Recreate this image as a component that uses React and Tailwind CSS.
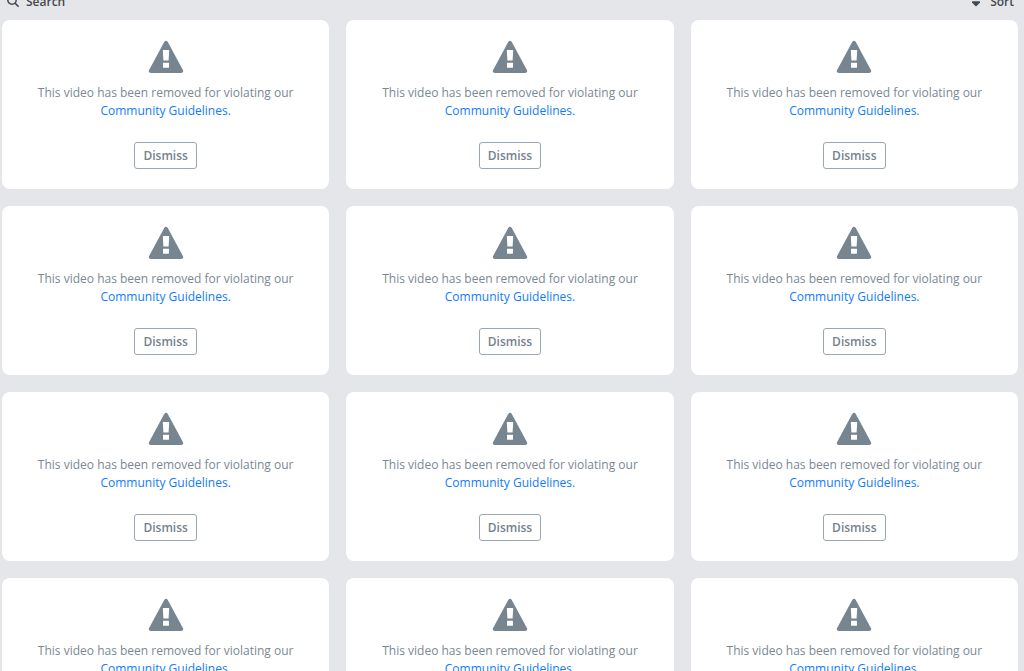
import React, { useState } from 'react';

const initialCards = Array.from({ length: 12 }, (_, index) => ({ id: index + 1 }));

function WarningIcon() {
  return (
    <svg className="w-9 h-[34px]" viewBox="0 0 36 34" fill="#778591" aria-hidden="true">
      <path
        fillRule="evenodd"
        d="M16.2 1.9Q18 -.2 19.8 1.9L35 30.2Q36 32.8 33 33H3Q0 32.8 1 30.2ZM14.8 10.4L15.4 20.6H20.6L21.2 10.4Q21.2 10 20.8 10H15.2Q14.8 10 14.8 10.4ZM15.4 22.7Q15 22.7 15 23.1V27.3Q15 27.7 15.4 27.7H20.6Q21 27.7 21 27.3V23.1Q21 22.7 20.6 22.7Z"
      />
    </svg>
  );
}

function SearchIcon() {
  return (
    <svg className="w-3 h-3" viewBox="0 0 12 12" fill="none" stroke="#45494d" strokeWidth="1.5" aria-hidden="true">
      <circle cx="5" cy="4" r="4.2" />
      <path d="M8 7.1L11.6 10.7" />
    </svg>
  );
}

function CaretIcon() {
  return (
    <svg className="mt-[3px] w-2 h-1.5" viewBox="0 0 8 6" fill="#45494d" aria-hidden="true">
      <path d="M0 .8Q0 .3 .6 .3H7.4Q8 .3 8 .8V1.4L4.4 5.2Q4 5.5 3.6 5.2L0 1.4Z" />
    </svg>
  );
}

function RemovedCard({ onDismiss }) {
  return (
    <article className="flex flex-col items-center bg-white rounded-lg px-4 py-5 text-center">
      <WarningIcon />
      <p className="mt-2.5 text-xs leading-[18px] text-[#7b8894]">
        This video has been removed for violating our
        <br />
        <a href="#guidelines" className="text-[#0f7bff]">Community Guidelines.</a>
      </p>
      <button
        type="button"
        onClick={onDismiss}
        className="mt-[22px] h-[27px] px-2 rounded-[3px] border border-[#9aa6b0] text-xs leading-[18px] font-semibold text-[#75828e]"
      >
        Dismiss
      </button>
    </article>
  );
}

function App() {
  const [cards, setCards] = useState(initialCards);

  const handleDismiss = (id) => {
    setCards(prev => prev.filter(card => card.id !== id));
  };

  return (
    <div className="min-h-screen bg-[#e5e6ea] font-['Open_Sans',sans-serif]">
      {/* Toolbar */}
      <header className="-mt-[7px] mb-[9px] flex justify-between items-center pl-[7px] pr-2.5 text-xs leading-[18px] font-semibold text-[#45494d]">
        <button type="button" className="flex items-center gap-[7px]">
          <SearchIcon />
          Search
        </button>
        <button type="button" className="flex items-center gap-2.5">
          <CaretIcon />
          Sort
        </button>
      </header>

      {/* Removed videos */}
      <main className="grid grid-cols-3 gap-[17px] pl-0.5 pr-1.5">
        {cards.map(card => (
          <RemovedCard key={card.id} onDismiss={() => handleDismiss(card.id)} />
        ))}
      </main>
    </div>
  );
}

export default App;
